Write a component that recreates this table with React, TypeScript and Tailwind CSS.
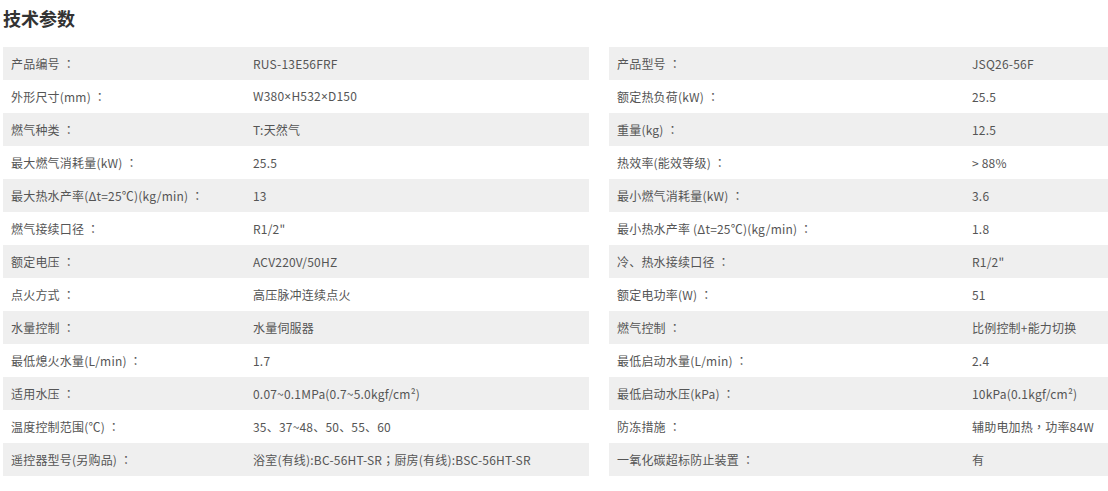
import React from "react";

const left: [string, string][] = [
  ["产品编号 ：", "RUS-13E56FRF"],
  ["外形尺寸(mm) ：", "W380×H532×D150"],
  ["燃气种类 ：", "T:天然气"],
  ["最大燃气消耗量(kW) ：", "25.5"],
  ["最大热水产率(Δt=25℃)(kg/min) ：", "13"],
  ["燃气接续口径 ：", "R1/2\""],
  ["额定电压 ：", "ACV220V/50HZ"],
  ["点火方式 ：", "高压脉冲连续点火"],
  ["水量控制 ：", "水量伺服器"],
  ["最低熄火水量(L/min) ：", "1.7"],
  ["适用水压 ：", "0.07~0.1MPa(0.7~5.0kgf/cm²)"],
  ["温度控制范围(℃) ：", "35、37~48、50、55、60"],
  ["遥控器型号(另购品) ：", "浴室(有线):BC-56HT-SR；厨房(有线):BSC-56HT-SR"],
];

const right: [string, string][] = [
  ["产品型号 ：", "JSQ26-56F"],
  ["额定热负荷(kW) ：", "25.5"],
  ["重量(kg) ：", "12.5"],
  ["热效率(能效等级) ：", "> 88%"],
  ["最小燃气消耗量(kW) ：", "3.6"],
  ["最小热水产率 (Δt=25℃)(kg/min) ：", "1.8"],
  ["冷、热水接续口径 ：", "R1/2\""],
  ["额定电功率(W) ：", "51"],
  ["燃气控制 ：", "比例控制+能力切换"],
  ["最低启动水量(L/min) ：", "2.4"],
  ["最低启动水压(kPa) ：", "10kPa(0.1kgf/cm²)"],
  ["防冻措施 ：", "辅助电加热，功率84W"],
  ["一氧化碳超标防止装置 ：", "有"],
];

function Txt({ s }: { s: string }) {
  const parts: React.ReactNode[] = [];
  let buf = "";
  const flush = () => {
    if (buf) parts.push(buf);
    buf = "";
  };
  Array.from(s).forEach((c, i) => {
    if (c === "：" || c === "，" || c === "；") {
      flush();
      parts.push(
        <span key={i} style={{ fontFamily: '"Noto Sans CJK TC", sans-serif' }}>
          {c}
        </span>
      );
    } else if (c === "×") {
      flush();
      parts.push(
        <span key={i} style={{ fontFamily: '"Noto Sans", sans-serif' }}>
          {c}
        </span>
      );
    } else buf += c;
  });
  flush();
  return <>{parts}</>;
}

function Table({ rows, labelW }: { rows: [string, string][]; labelW: string }) {
  return (
    <div className="flex flex-col">
      {rows.map(([k, v], i) => (
        <div
          key={i}
          className={`flex h-[33px] items-center text-[12px] text-[#555] ${i % 2 === 0 ? "bg-[#efefef]" : "bg-white"}`}
        >
          <div className={`${labelW} shrink-0 pl-[8px] whitespace-pre tracking-[0.2px]`}>
            <Txt s={k} />
          </div>
          <div className="whitespace-pre tracking-[0.2px]">
            <Txt s={v} />
          </div>
        </div>
      ))}
    </div>
  );
}

export default function App() {
  return (
    <div
      className="w-[1108px] h-[491px] bg-white overflow-hidden"
      style={{ fontFamily: '"Noto Sans CJK SC", "Noto Sans", sans-serif' }}
    >
      <div className="pl-[3px] pt-[4px] h-[47px] text-[18px] font-bold text-[#333] leading-[28px]">技术参数</div>
      <div className="flex pl-[3px]">
        <div className="w-[586px]">
          <Table rows={left} labelW="w-[250px]" />
        </div>
        <div className="w-[20px]" />
        <div className="flex-1">
          <Table rows={right} labelW="w-[363px]" />
        </div>
      </div>
    </div>
  );
}
